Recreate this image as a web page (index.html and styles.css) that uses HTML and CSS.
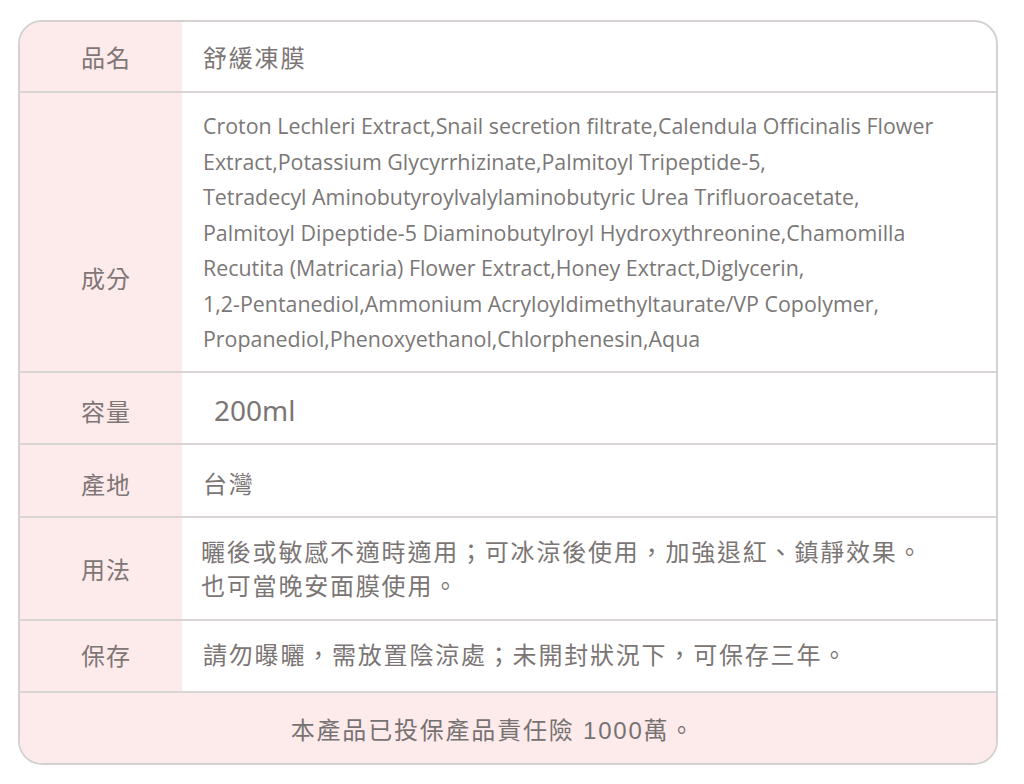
FILE: index.html
```html
<!DOCTYPE html>
<html lang="zh-TW">
<head>
<meta charset="utf-8">
<link rel="stylesheet" href="styles.css">
</head>
<body>
<div class="spec">
  <div class="row r1">
    <div class="label">品名</div>
    <div class="value cjk">舒緩凍膜</div>
  </div>
  <div class="row r2">
    <div class="label low">成分</div>
    <div class="value latin">Croton Lechleri Extract,Snail secretion filtrate,Calendula Officinalis Flower<br>Extract,Potassium Glycyrrhizinate,Palmitoyl Tripeptide-5,<br>Tetradecyl Aminobutyroylvalylaminobutyric Urea Trifluoroacetate,<br>Palmitoyl Dipeptide-5 Diaminobutylroyl Hydroxythreonine,Chamomilla<br>Recutita (Matricaria) Flower Extract,Honey Extract,Diglycerin,<br>1,2-Pentanediol,Ammonium Acryloyldimethyltaurate/VP Copolymer,<br>Propanediol,Phenoxyethanol,Chlorphenesin,Aqua</div>
  </div>
  <div class="row r3">
    <div class="label down">容量</div>
    <div class="value vol">200ml</div>
  </div>
  <div class="row r4">
    <div class="label down">產地</div>
    <div class="value cjk down">台灣</div>
  </div>
  <div class="row r5">
    <div class="label">用法</div>
    <div class="value cjk two">曬後或敏感不適時適用；可冰涼後使用，加強退紅、鎮靜效果。<br>也可當晚安面膜使用。</div>
  </div>
  <div class="row r6">
    <div class="label up">保存</div>
    <div class="value cjk up">請勿曝曬，需放置陰涼處；未開封狀況下，可保存三年。</div>
  </div>
  <div class="foot">本產品已投保產品責任險 1000萬。</div>
</div>
</body>
</html>
```

FILE: styles.css
```css
html, body {
  margin: 0;
  padding: 0;
  background: #ffffff;
}
body {
  padding: 20px 0 0 18px;
  color: #7b7575;
  font-family: "Noto Sans CJK TC", "Noto Sans", sans-serif;
}
.spec {
  width: 976px;
  border: 2px solid #d5d1d1;
  border-radius: 24px;
  overflow: hidden;
  background: #ffffff;
}
.row {
  display: grid;
  grid-template-columns: 162px 1fr;
  border-top: 2px solid #d9d5d5;
}
.row.r1 { border-top: none; height: 69px; }
.row.r2 { height: 278px; }
.row.r3 { height: 70px; }
.row.r4 { height: 71px; }
.row.r5 { height: 101px; }
.row.r6 { height: 70px; }
.label {
  background: #fdebeb;
  display: flex;
  align-items: center;
  justify-content: center;
  padding-left: 10px;
  font-size: 24px;
  letter-spacing: 1px;
  color: #7f7676;
}
.label.low { padding-top: 90px; }
.down { padding-top: 5px; }
.up { padding-bottom: 4px; }
.value {
  display: flex;
  align-items: center;
  padding-left: 21px;
}
.cjk {
  font-size: 24px;
  letter-spacing: 1.8px;
  line-height: 34px;
}
.value.two {
  display: block;
  padding-top: 16px;
  padding-left: 19px;
}
.latin {
  display: block;
  font-family: "Open Sans", sans-serif;
  font-size: 21.4px;
  line-height: 35.5px;
  padding-top: 15px;
  color: #7b7777;
  font-variant-ligatures: none;
}
.vol {
  font-family: "Noto Sans", sans-serif;
  font-size: 28px;
  padding-left: 32px;
  padding-top: 3px;
}
.foot {
  border-top: 2px solid #d9d5d5;
  background: #fdebeb;
  height: 70px;
  display: flex;
  align-items: center;
  justify-content: center;
  padding-right: 30px;
  font-family: "Liberation Sans", "Noto Sans CJK TC", sans-serif;
  font-size: 24px;
  letter-spacing: 1.8px;
  color: #777272;
}
```
